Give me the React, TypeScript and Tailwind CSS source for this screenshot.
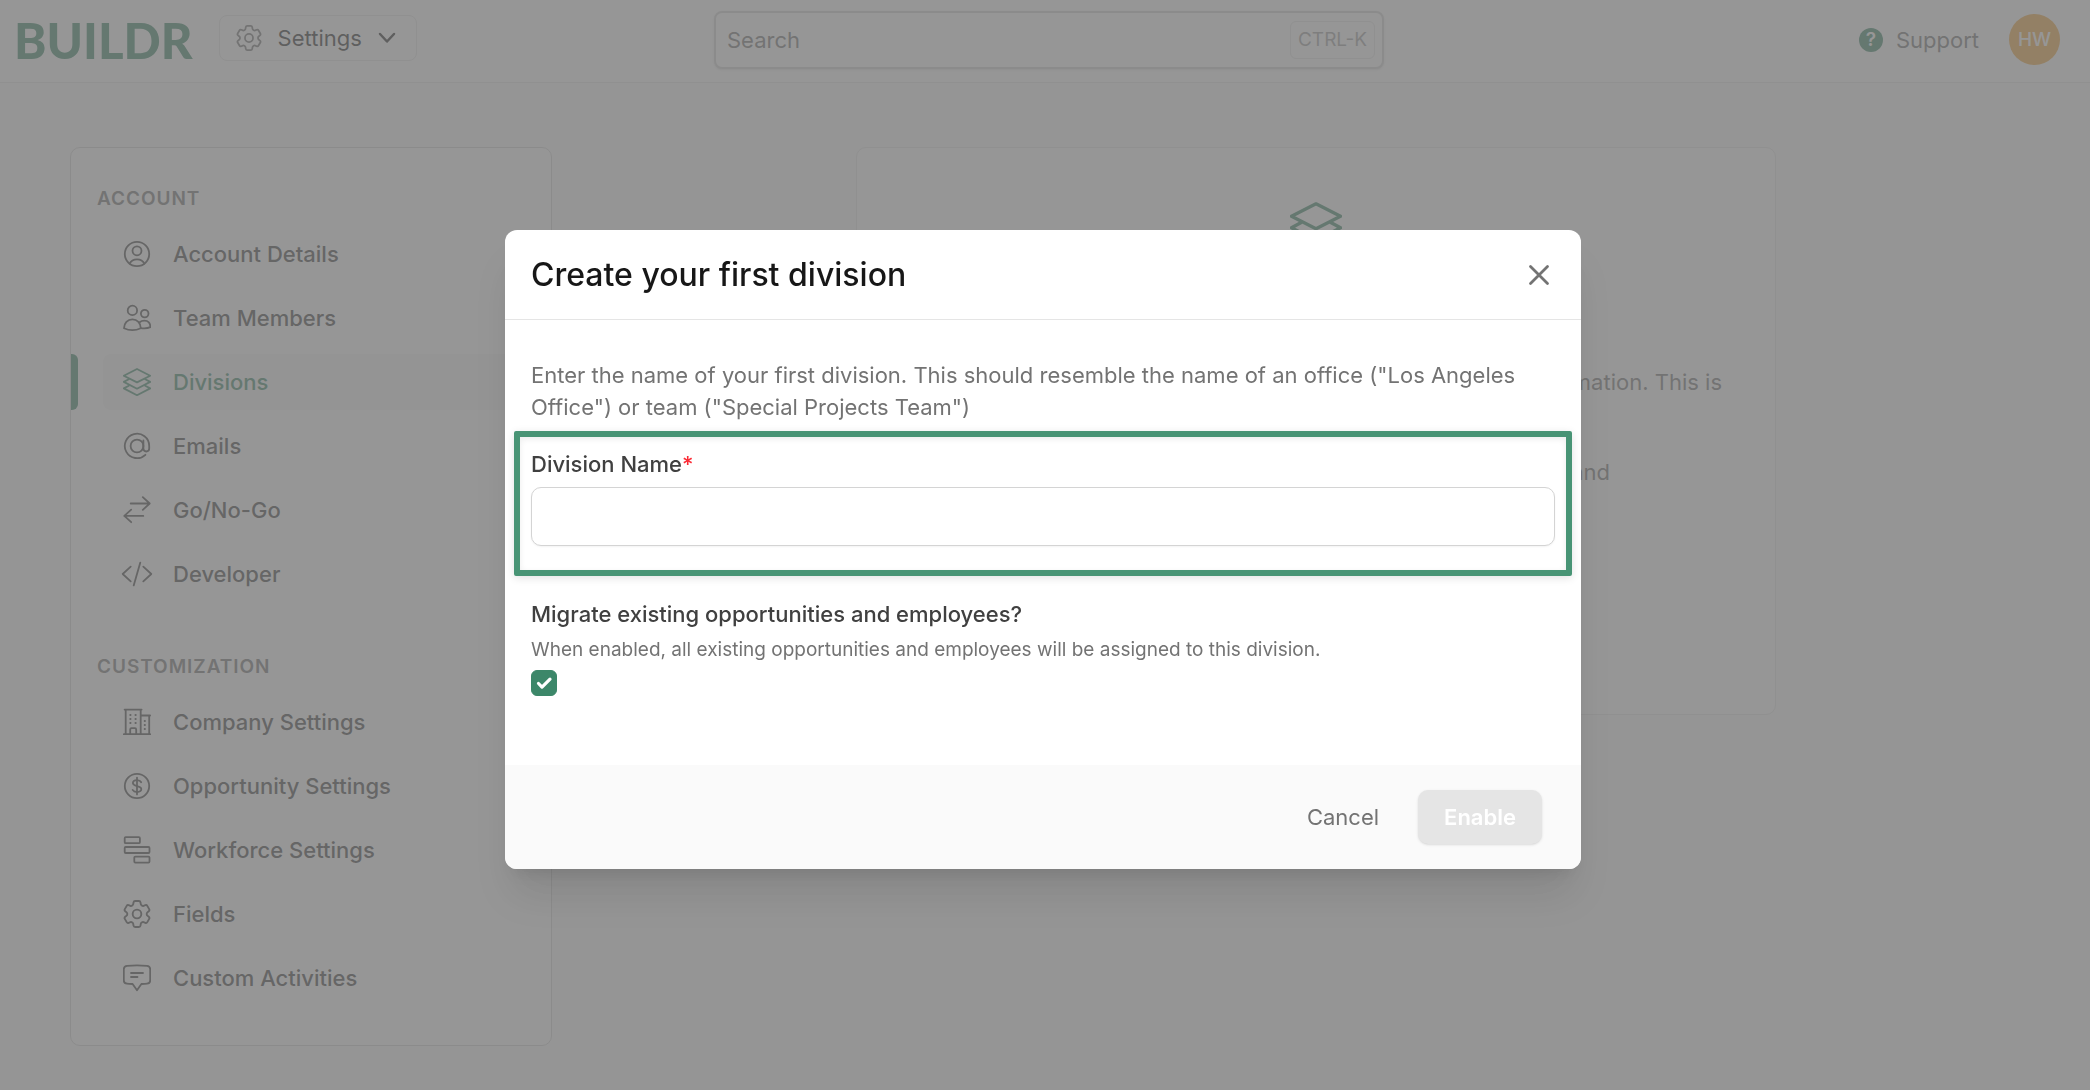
import * as React from "react";

const iconProps = {
  viewBox: "0 0 28 28",
  fill: "none",
  stroke: "currentColor",
  strokeWidth: 1.8,
  strokeLinecap: "round",
  strokeLinejoin: "round",
  "aria-hidden": true,
} as const;

type IconProps = { className?: string };

const UserCircleIcon = ({ className = "size-7" }: IconProps) => (
  <svg {...iconProps} className={className}>
    <circle cx="14" cy="14" r="12.2" />
    <circle cx="14" cy="10.8" r="4.5" />
    <path d="M6.6 23.6C8 20.6 10.8 19.3 14 19.3s6 1.3 7.4 4.3" />
  </svg>
);

const UsersIcon = ({ className = "size-7" }: IconProps) => (
  <svg {...iconProps} className={className}>
    <circle cx="9.4" cy="6.4" r="4.7" />
    <circle cx="21.7" cy="9.6" r="3.8" />
    <path d="M1 24.2c0-5 3.6-8.9 8.4-8.9s8.4 3.9 8.4 8.9c-5.2 2.5-11.6 2.5-16.8 0Z" />
    <path d="M16.6 18.3c1.3-1.1 3-1.7 4.8-1.7 3.7 0 6 2.7 6 6.6-3 1.3-6.4 1.4-9.6.9" />
  </svg>
);

const LayersIcon = ({ className = "size-7" }: IconProps) => (
  <svg {...iconProps} className={className}>
    <path d="M14 1 27.2 7.7 14 14.4.8 7.7Z" />
    <path d="m5.8 11.2-5 2.7L14 20.7l13.2-6.8-5-2.7" />
    <path d="m5.8 17.7-5 2.7L14 27.2l13.2-6.8-5-2.7" />
  </svg>
);

const AtIcon = ({ className = "size-7" }: IconProps) => (
  <svg {...iconProps} className={className}>
    <circle cx="14" cy="14" r="6.4" />
    <path d="M20.4 8.4v8.2a2.9 2.9 0 0 0 5.8 0V14a12.2 12.2 0 1 0-3.8 8.8" />
  </svg>
);

const ArrowsIcon = ({ className = "size-7" }: IconProps) => (
  <svg {...iconProps} className={className}>
    <path d="M7.7 7.5h19M19.8 1.2l6.9 6.3-6.9 6.3" />
    <path d="M20.3 19.9h-19M8.2 13.6l-6.9 6.3 6.9 6.3" />
  </svg>
);

const CodeIcon = ({ className = "size-7" }: IconProps) => (
  <svg {...iconProps} className={className + " overflow-visible"}>
    <path d="m7.7 6.7-8 7.3 8 7.3M20.3 6.7l8 7.3-8 7.3M17.3 2.6l-6.6 22.8" />
  </svg>
);

const BuildingIcon = ({ className = "size-7" }: IconProps) => (
  <svg {...iconProps} className={className}>
    <path d="M.8 26.2h26.4M2.7 26V1.6h15V26M1.6 1.6h17M17.7 7.5h8.5V26M17.7 7.5h9.4" />
    <path d="M7.2 26v-4.6c0-.8.5-1.3 1.3-1.3h3.4c.8 0 1.3.5 1.3 1.3V26" />
    <path
      d="M7.3 7h.2M12.5 7h.2M7.3 11h.2M12.5 11h.2M7.3 15h.2M12.5 15h.2M21.7 13h.2M21.7 17h.2M21.7 21h.2"
      strokeWidth="2"
    />
  </svg>
);

const DollarIcon = ({ className = "size-7" }: IconProps) => (
  <svg {...iconProps} className={className}>
    <circle cx="14" cy="14" r="12.2" />
    <path d="M14 5.6v16.8" />
    <path d="M18.2 10.3c-.7-1.3-2.2-2.1-4.2-2.1-2.5 0-4.1 1.1-4.1 2.9 0 4.1 8.4 1.8 8.4 6 0 1.8-1.7 2.9-4.3 2.9-2 0-3.6-.8-4.4-2.1" />
  </svg>
);

const WorkforceIcon = ({ className = "size-7" }: IconProps) => (
  <svg {...iconProps} className={className}>
    <rect x="1.7" y="1.2" width="15.2" height="6" rx="1" />
    <rect x="1.7" y="11" width="24.8" height="6" rx="1" />
    <rect x="11.3" y="20.6" width="15.2" height="6" rx="1" />
  </svg>
);

const CogIcon = ({ className = "size-7" }: IconProps) => (
  <svg
    {...iconProps}
    viewBox="2.3 2.3 19.4 19.4"
    strokeWidth={1.3}
    className={className}
  >
    <path d="M9.594 3.94c.09-.542.56-.94 1.11-.94h2.593c.55 0 1.02.398 1.11.94l.213 1.281c.063.374.313.686.645.87.074.04.147.083.22.127.325.196.72.257 1.075.124l1.217-.456a1.125 1.125 0 0 1 1.37.49l1.296 2.247a1.125 1.125 0 0 1-.26 1.431l-1.003.827c-.293.241-.438.613-.43.992a7.723 7.723 0 0 1 0 .255c-.008.378.137.75.43.991l1.004.827c.424.35.534.955.26 1.43l-1.298 2.247a1.125 1.125 0 0 1-1.369.491l-1.217-.456c-.355-.133-.75-.072-1.076.124a6.47 6.47 0 0 1-.22.128c-.331.183-.581.495-.644.869l-.213 1.281c-.09.543-.56.94-1.11.94h-2.594c-.55 0-1.019-.398-1.11-.94l-.213-1.281c-.062-.374-.312-.686-.644-.87a6.52 6.52 0 0 1-.22-.127c-.325-.196-.72-.257-1.076-.124l-1.217.456a1.125 1.125 0 0 1-1.369-.49l-1.297-2.247a1.125 1.125 0 0 1 .26-1.431l1.004-.827c.292-.24.437-.613.43-.991a6.932 6.932 0 0 1 0-.255c.007-.38-.138-.751-.43-.992l-1.004-.827a1.125 1.125 0 0 1-.26-1.43l1.297-2.247a1.125 1.125 0 0 1 1.37-.491l1.216.456c.356.133.751.072 1.076-.124.072-.044.146-.086.22-.128.332-.183.582-.495.644-.869l.214-1.28Z" />
    <circle cx="12" cy="12" r="3" />
  </svg>
);

const ChatIcon = ({ className = "size-7" }: IconProps) => (
  <svg {...iconProps} className={className}>
    <path d="M4 1.9c6.500-.7 13.500-.7 20 0 2 .2 3.200 1.400 3.200 3.400v11c0 2-1.200 3.100-3.200 3.300-1.500.2-3.400.3-5.600.4L14 26.300 9.600 20C7.400 19.900 5.500 19.800 4 19.600c-2-.2-3.200-1.300-3.200-3.300v-11C.8 3.300 2 2.100 4 1.900Z" />
    <path d="M8 9h12M8 13h6.500" />
  </svg>
);

const sections = [
  {
    title: "Account",
    items: [
      { label: "Account Details", Icon: UserCircleIcon },
      { label: "Team Members", Icon: UsersIcon },
      { label: "Divisions", Icon: LayersIcon, active: true },
      { label: "Emails", Icon: AtIcon },
      { label: "Go/No-Go", Icon: ArrowsIcon },
      { label: "Developer", Icon: CodeIcon },
    ],
  },
  {
    title: "Customization",
    items: [
      { label: "Company Settings", Icon: BuildingIcon },
      { label: "Opportunity Settings", Icon: DollarIcon },
      { label: "Workforce Settings", Icon: WorkforceIcon },
      { label: "Fields", Icon: CogIcon },
      { label: "Custom Activities", Icon: ChatIcon },
    ],
  },
];

const Header = () => (
  <header className="flex h-[83px] items-center border-b border-neutral-200 bg-white pr-[30px] pb-[3px] pl-[14px]">
    <div className="flex flex-1 items-center gap-[26px]">
      <a
        href="#"
        className="font-[Lato] text-[49px] leading-[60px] font-black text-[#3c8769]"
      >
        BUILDR
      </a>
      <button
        type="button"
        className="mb-1 flex h-[46px] items-center rounded-lg border border-neutral-200 px-4 text-neutral-800"
      >
        <CogIcon className="size-[26px] text-neutral-500" />
        <span className="ml-4">Settings</span>
        <svg
          {...iconProps}
          viewBox="0 0 18 12"
          strokeWidth={2.5}
          className="mr-1 ml-4 h-3 w-[18px]"
        >
          <path d="m2 2 7 7.500 7-7.500" />
        </svg>
      </button>
    </div>
    <div className="relative mr-3 ml-9 w-[670px]">
      <input
        type="text"
        aria-label="Search"
        placeholder="Search"
        className="block h-[58px] w-full rounded-lg border-2 border-neutral-300 bg-white px-[11px] shadow-sm placeholder:text-neutral-500"
      />
      <kbd className="absolute top-[10px] right-[9px] flex h-[38px] items-center rounded-md border border-neutral-200 px-[7px] font-[Inter] text-[19px] text-neutral-400">
        CTRL-K
      </kbd>
    </div>
    <div className="flex flex-1 items-center justify-end">
      <a href="#" className="flex items-center gap-[13px] text-neutral-500">
        <span className="flex size-6 items-center justify-center rounded-full bg-[#3c8769] text-[19px] leading-6 font-semibold text-white">
          ?
        </span>
        Support
      </a>
      <button
        type="button"
        className="ml-[30px] size-[51px] rounded-full bg-[#f3a73c] text-[19px] font-medium text-white"
      >
        HW
      </button>
    </div>
  </header>
);

const Sidebar = () => (
  <nav className="w-[482px] shrink-0 rounded-[10px] border border-neutral-300 bg-white pt-[37px] pb-[39px]">
    {sections.map((section) => (
      <div key={section.title} className="not-first:mt-[51px]">
        <h2 className="mb-[13px] pl-[26px] text-[19px] leading-7 font-semibold tracking-wider text-neutral-500 uppercase">
          {section.title}
        </h2>
        <ul className="flex flex-col gap-2">
          {section.items.map(({ label, Icon, active }: any) => (
            <li key={label} className="flex items-stretch">
              <span
                className={
                  active ? "w-[7px] rounded-r-md bg-[#3c8769]" : "w-[7px]"
                }
              />
              <a
                href="#"
                className={
                  active
                    ? "mx-[25px] flex h-14 flex-1 items-center gap-[22px] rounded-lg bg-neutral-100 pl-5 font-medium text-[#3c8769]"
                    : "mx-[25px] flex h-14 flex-1 items-center gap-[22px] rounded-lg pl-5 font-medium text-neutral-700"
                }
              >
                <Icon />
                {label}
              </a>
            </li>
          ))}
        </ul>
      </div>
    ))}
  </nav>
);

const DivisionsIntro = () => (
  <section className="w-[920px] rounded-[10px] border border-neutral-200 bg-white pt-[54px] pb-[226px] text-right text-neutral-500">
    <LayersIcon className="mx-auto size-[52px] text-[#3c8769]" />
    <p className="mx-auto mt-[112px] w-[812px]">information. This is</p>
    <p className="mx-auto mt-[58px] w-[588px]">and</p>
  </section>
);

const DivisionModal = () => {
  const [name, setName] = React.useState("");
  const [migrate, setMigrate] = React.useState(true);

  return (
    <div className="fixed inset-0 flex items-start justify-center bg-neutral-500/75 pt-[230px] pr-1">
      <form
        role="dialog"
        aria-labelledby="modal-title"
        className="w-full max-w-[1076px] overflow-hidden rounded-xl bg-white shadow-[0_32px_40px_-8px_rgba(0,0,0,0.1),0_13px_16px_-10px_rgba(0,0,0,0.1)]"
      >
        <div className="flex h-[90px] items-center justify-between border-b border-neutral-200 px-[26px]">
          <h2
            id="modal-title"
            className="text-[32px] leading-10 font-medium text-neutral-900"
          >
            Create your first division
          </h2>
          <button type="button" aria-label="Close" className="p-1 text-neutral-500">
            <svg
              {...iconProps}
              viewBox="0 0 24 24"
              strokeWidth={2.8}
              className="size-6"
            >
              <path d="m3.500 3.500 17 17M20.500 3.500l-17 17" />
            </svg>
          </button>
        </div>
        <div className="px-[26px] pt-[39px] pb-[69px]">
          <p className="text-neutral-500">
            Enter the name of your first division. This should resemble the name
            of an office ("Los Angeles Office") or team ("Special Projects
            Team")
          </p>
          <div className="-mx-[17px] mt-2 rounded-xs border-6 border-[#489475] px-[11px] pt-[11px] pb-6 shadow-[0_2px_8px_rgba(0,0,0,0.12),inset_0_2px_6px_rgba(0,0,0,0.08)]">
            <label
              htmlFor="division-name"
              className="block font-medium text-neutral-700"
            >
              Division Name<span className="text-red-500">*</span>
            </label>
            <input
              id="division-name"
              type="text"
              value={name}
              onChange={(e) => setName(e.target.value)}
              className="mt-[7px] block h-[59px] w-full rounded-[10px] border border-neutral-300 bg-white px-4 shadow-xs"
            />
          </div>
          <label
            htmlFor="migrate"
            className="mt-[22px] block font-medium text-neutral-700"
          >
            Migrate existing opportunities and employees?
          </label>
          <p className="mt-[6px] text-[19px] leading-7 text-neutral-500">
            When enabled, all existing opportunities and employees will be
            assigned to this division.
          </p>
          <div className="relative mt-[6px] size-[26px]">
            <input
              id="migrate"
              type="checkbox"
              checked={migrate}
              onChange={(e) => setMigrate(e.target.checked)}
              className="peer block size-[26px] appearance-none rounded-md border border-neutral-300 checked:border-[#3c8769] checked:bg-[#3c8769]"
            />
            <svg
              {...iconProps}
              viewBox="0 0 26 26"
              strokeWidth={3.2}
              className="pointer-events-none absolute inset-0 hidden size-[26px] text-white peer-checked:block"
            >
              <path d="m7.500 13.500 3.500 3.600 8-8" />
            </svg>
          </div>
        </div>
        <div className="flex h-[104px] items-center justify-end gap-[13px] bg-neutral-50 px-[39px]">
          <button type="button" className="h-[54px] px-[26px] text-neutral-500">
            Cancel
          </button>
          <button
            type="submit"
            disabled={!name}
            className="h-[54px] rounded-[10px] bg-[#3c8769] px-[26px] font-semibold text-white shadow-sm disabled:bg-neutral-200"
          >
            Enable
          </button>
        </div>
      </form>
    </div>
  );
};

const App = () => {
  return (
    <div className="min-h-screen bg-neutral-50 font-[Inter,sans-serif] text-[22px] leading-8">
      <Header />
      <main className="flex items-start pt-16 pr-[10px] pb-11 pl-[70px]">
        <Sidebar />
        <div className="flex flex-1 justify-center">
          <DivisionsIntro />
        </div>
      </main>
      <DivisionModal />
    </div>
  );
};

export default App;
